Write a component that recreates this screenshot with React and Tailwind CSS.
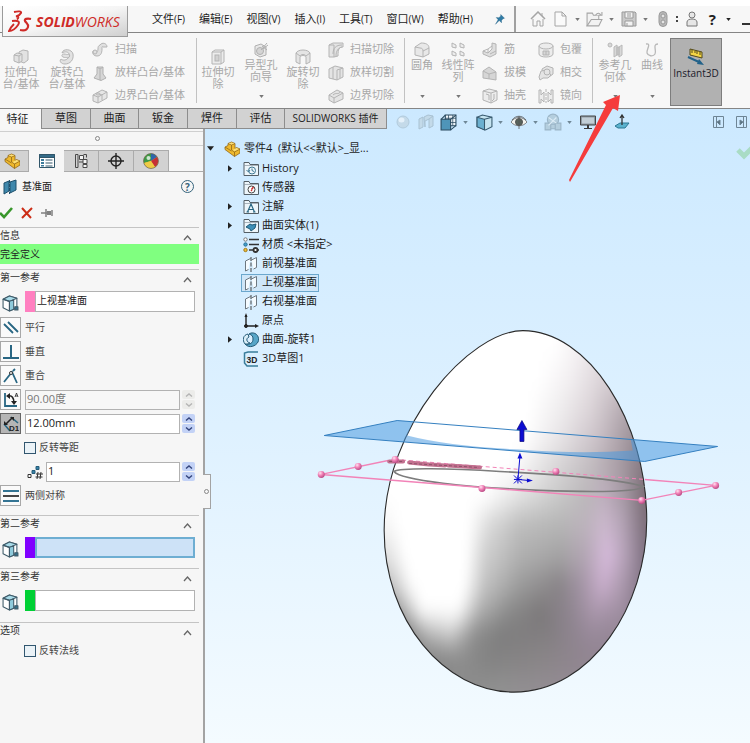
import React from "react";

const menus = ["文件(F)", "编辑(E)", "视图(V)", "插入(I)", "工具(T)", "窗口(W)", "帮助(H)"];

const commandTabs = [
  { label: "特征", width: "w-[41px]" },
  { label: "草图", width: "w-[49px]" },
  { label: "曲面", width: "w-[48px]" },
  { label: "钣金", width: "w-[49px]" },
  { label: "焊件", width: "w-[49px]" },
  { label: "评估", width: "w-[48px]" },
  { label: "SOLIDWORKS 插件", width: "w-[103px]" },
];

// Small 16x16 drawings, keyed by name
const icons = {
  extrude: (
    <g fill="#e2e2e2" stroke="#b4b4b4">
      <path d="M6 3l4-2 5 1v9l-4 3-5-2z" />
      <path d="M1 6l3-2 5 1v7l-3 2-5-2z" />
      <path d="M1 6l5 1 3-2M6 7v7" fill="none" />
    </g>
  ),
  revolve: (
    <g fill="#e2e2e2" stroke="#b4b4b4">
      <path d="M3 4C4-1 13 0 14 5c1 6-3 10-8 10-4 0-6-3-4-5 2 2 6 1 7-1-2-1-3 0-5-1s-1-3 1-3 3 1 5 0c0-2-4-3-7-1z" />
      <path d="M10 5c1 1 1 3-1 4" fill="none" />
    </g>
  ),
  sweep: (
    <g fill="#e0e0e0" stroke="#b4b4b4">
      <path d="M8 3c2-3 7-2 7 2h-4c-1-1-1 0-1 2 0 5-2 7-5 7s-5-2-4-5h3c0 2 2 1 2-2 0-2 0-3 2-4z" />
      <circle cx="3" cy="10" r="2" />
    </g>
  ),
  loft: (
    <g fill="#d6d6d6" stroke="#b0b0b0">
      <path d="M5 2h6v7l3 4-5 2.500-7-2.500 3-4z" />
      <path d="M5 2c2 2 4 2 6 0M8 4v11" fill="none" />
    </g>
  ),
  boundary: (
    <g fill="#e6e6e6" stroke="#b4b4b4">
      <path d="M1 7l9-5 5 2v6l-9 5-5-2z" />
      <path d="M1 7l5 2 9-5M6 9v6M5 5l5 2v5" fill="none" />
      <ellipse cx="6" cy="6" rx="2" ry="1" />
    </g>
  ),
  cutExtrude: (
    <g fill="#ececec" stroke="#b4b4b4">
      <path d="M2 3l3-2h9v12l-3 2H2z" />
      <path d="M2 3h9v12M11 3l3-2" fill="none" />
      <rect x="5" y="6" width="4" height="6" fill="#d2d2d2" />
    </g>
  ),
  hole: (
    <g fill="#e8e8e8" stroke="#b0b0b0">
      <path d="M2 4l6-2 5 3v8l-6 2-5-3z" />
      <circle cx="7" cy="9" r="3.500" fill="#d4d4d4" />
      <path d="M8 8l6-7M10 7l5-4M9 4l5 4" fill="none" />
    </g>
  ),
  cutRevolve: (
    <g fill="#e4e4e4" stroke="#b4b4b4">
      <path d="M1 4c2-4 12-4 14 0v9l-4 2V8c-1-2-5-2-6 0v7l-4-2z" />
      <path d="M1 4l4 3c1-2 5-2 6 0l4-3" fill="none" />
    </g>
  ),
  cutSweep: (
    <g fill="#e4e4e4" stroke="#b4b4b4">
      <path d="M1 3l4-2h10v4c-4 0-5 2-5 9l-4 1H1z" />
      <path d="M1 3h5v12M5 12c0-6 3-9 9-9M8 14c0-5 2-8 6-9" fill="none" />
    </g>
  ),
  cutLoft: (
    <g fill="#e4e4e4" stroke="#b4b4b4">
      <path d="M1 4l6-3 8 2v9l-6 3-8-2z" />
      <path d="M5 2v12M9 5v10M9 5l6-2M12 4v9" fill="none" />
    </g>
  ),
  cutBoundary: (
    <g fill="#e4e4e4" stroke="#b4b4b4">
      <path d="M1 7l8-5 6 3v6l-9 4-5-3z" />
      <path d="M1 7l5 3 9-5M6 10v5M5 7c3-3 6 0 7-3" fill="none" />
    </g>
  ),
  fillet: (
    <g fill="#e8e8e8" stroke="#b4b4b4">
      <path d="M1 5l6-4c4 0 8 1 8 5v6l-6 3-8-2z" />
      <path d="M1 5l5 1c2 0 3 1 3 3v6M9 9l6-3" fill="none" />
    </g>
  ),
  pattern: (
    <g fill="#eeeeee" stroke="#b4b4b4">
      <path d="M2 1l4 2v3l-4-1zM10 1l4 2v3l-4-1zM2 9l4 2v3l-4-1zM10 9l4 2v3l-4-1z" />
    </g>
  ),
  rib: (
    <g fill="#dedede" stroke="#b4b4b4">
      <path d="M10 1l4 1v10l-6 3-7-3v-3l5 2 4-4z" />
      <path d="M6 11V7l4-3M1 9l5-2M8 12l6-3" fill="none" />
    </g>
  ),
  draft: (
    <g fill="#d6d6d6" stroke="#b4b4b4">
      <path d="M1 6l6-4 7 5v8l-6-1-7-1z" />
      <path d="M1 6l6 3v5M7 9l7-2" fill="none" />
    </g>
  ),
  shell: (
    <g fill="#ececec" stroke="#b4b4b4">
      <path d="M1 3l6-2 8 2v9l-6 3-8-3z" />
      <path d="M1 3l8 2v10M9 5l6-2M4 6l3 1v5M12 6v5l-2 2" fill="none" />
    </g>
  ),
  wrap: (
    <g fill="#ececec" stroke="#b4b4b4">
      <path d="M1 4v8c0 4 14 4 14 0V4" />
      <ellipse cx="8" cy="4" rx="7" ry="3" />
      <path d="M5 9h6v4H5zM8 9v4" fill="#d6d6d6" />
    </g>
  ),
  intersect: (
    <g fill="#e4e4e4" stroke="#b4b4b4">
      <path d="M4 4l5-3 6 2v6l-4 3-6-2z" />
      <path d="M1 12l2-6 6-1 4 5-3 3H5l-3 2z" />
      <circle cx="9" cy="7" r="3" />
    </g>
  ),
  mirror: (
    <g fill="#ececec" stroke="#b4b4b4">
      <path d="M1 2h2v5l3-3v10l-3-3v4H1zM15 2h-2v5l-3-3v10l3-3v4h2z" />
      <path d="M8 1v14" strokeDasharray="3 1" />
    </g>
  ),
  refGeometry: (
    <g fill="#d8d8d8" stroke="#b8b8b8">
      <circle cx="3" cy="3" r="2" />
      <path d="M7 5l3-2v10l-3 2zM12 5l3-2v10l-3 2zM10 5h2v8h-2z" />
    </g>
  ),
  curves: (
    <path d="M2 2c6-1 0 6 1 9s6 4 8 1-3-10 3-10" fill="none" stroke="#b8b8b8" strokeWidth="1.300" />
  ),
  home: (
    <g fill="none" stroke="#a5a5a5">
      <path d="M1 8l7-7 7 7" strokeWidth="1.500" />
      <path d="M3 8v7h4v-5h3v5h3V8M12 2v3" />
    </g>
  ),
  file: <path d="M3 1h7l4 4v10H3zM10 1v4h4" fill="#fafafa" stroke="#a5a5a5" />,
  open: (
    <g fill="#f2f2f2" stroke="#a5a5a5">
      <path d="M1 14V2h5l1 2h5v4" />
      <path d="M1 14l4-6h10l-3 6zM9 4c2-3 4-2 5 0M12 4h3V1" />
    </g>
  ),
  save: (
    <g fill="#c9c9c9" stroke="#9b9b9b">
      <path d="M1 1h13l1 1v13H1z" />
      <path d="M4 1h8v6H4zM4 10h8v5H4z" fill="#f2f2f2" />
      <path d="M6 3h4M6 5h4M6 12v3" />
    </g>
  ),
  traffic: (
    <g fill="#b8b8b8" stroke="#999">
      <rect x="4" y="0.500" width="8" height="15" rx="4" />
      <circle cx="8" cy="5" r="2" fill="#e4e4e4" />
      <circle cx="8" cy="11" r="2" fill="#e4e4e4" />
    </g>
  ),
  user: (
    <g fill="#e6e6e6" stroke="#777">
      <circle cx="8" cy="4" r="3" />
      <path d="M3 15v-4c0-4 10-4 10 0v4z" />
    </g>
  ),
  pin: (
    <path d="M9 2l5 5-2 .5-2 2.500v3L7 10l-5 5 3.500-6L3 6l3.500.3L9 4z" fill="#2f7ba5" stroke="#205d80" strokeWidth=".5" />
  ),
  sphere: (
    <g fill="#c4dae9" stroke="#b2cbdc">
      <circle cx="8" cy="8" r="6" />
      <ellipse cx="6.500" cy="6" rx="3" ry="2.500" fill="#e5f1fa" stroke="none" />
    </g>
  ),
  section: (
    <g fill="#c3dae9" stroke="#a9c2d3">
      <path d="M1 5l4-2v10l-4 2zM6 3l4-2 5 1v10l-4 2V5L7 7v6z" />
      <path d="M11 5l4-3" />
    </g>
  ),
  viewOrient: (
    <g stroke="#28495e">
      <path d="M5 1h10v10H5z" fill="#f0f6fa" />
      <path d="M8 1v10M12 1v10M5 4h10M5 8h10" strokeWidth=".7" />
      <path d="M1 5l4-4M10 5l5-4M10 15l5-4" />
      <path d="M1 5h9v10H1z" fill="#4f95b9" />
    </g>
  ),
  displayStyle: (
    <g fill="#6bb0d0" stroke="#37596e">
      <path d="M1 3l5-2 9 2v9l-6 3-8-3z" fill="#c5e4f1" />
      <path d="M1 3l7 2v10l-7-3z" />
      <path d="M8 5l7-2" fill="none" />
    </g>
  ),
  eye: (
    <g fill="#f4f4ef" stroke="#555">
      <path d="M0 8c4-6 12-6 16 0-4 5-12 5-16 0z" strokeWidth=".7" />
      <circle cx="8" cy="8" r="3.500" fill="#57635b" />
      <path d="M8 2v13M1 6c4-5 10-5 14 0" fill="none" strokeWidth=".8" />
    </g>
  ),
  scene: (
    <g fill="#b4cede" stroke="#9bb5c7">
      <circle cx="8" cy="6" r="5" />
      <path d="M1 9h5v6H1zM10 9h5v6h-5zM6 10h4v4H6z" />
      <path d="M4 4l7 5M11 4L4 11" stroke="#dcecf6" />
    </g>
  ),
  monitor: (
    <g>
      <path d="M.5 2h15v9H.5z" fill="#8d9aa4" stroke="#454545" />
      <path d="M2 3.500h12v6H2z" fill="#c2ced6" />
      <path d="M7 11h2v3h3v1H4v-1h3z" fill="#383838" />
    </g>
  ),
  normalTo: (
    <g>
      <path d="M1 12l5-3h9l-4 5H4z" fill="#5cb2ce" stroke="#2c7894" />
      <path d="M8 11V2M6 4l2-3 2 3" fill="none" stroke="#333" strokeWidth="1.300" />
    </g>
  ),
  paneLeft: (
    <g fill="none" stroke="#6e8595">
      <path d="M3.500 2.500h10v11h-10zM6.500 3v11" />
      <path d="M10 6L7 8l3 3z" fill="#56707f" />
    </g>
  ),
  paneRight: (
    <g fill="none" stroke="#6e8595">
      <path d="M3.500 2.500h10v11h-10zM10.500 3v11" />
      <path d="M7 6l3 2-3 3z" fill="#56707f" />
    </g>
  ),
  part: (
    <g stroke="#91681c" strokeWidth=".8" strokeLinejoin="round">
      <path d="M4 2.500L7.500 1 11 2.500v5l1.500-1L16 8v4l-5.500 3.500L1 8.500V6l3-1.500z" fill="#efb92d" />
      <path d="M4 2.500L7.500 4v5l3 2v4.500M7.500 4L11 2.500M10.500 11L16 8M1 6l6.500 4" fill="none" />
      <path d="M4.500 2.600L7.500 1.500l3 1-3 1zM8.500 9l4-2 2.500 1-4.500 2.300z" fill="#fbe07a" stroke="none" />
    </g>
  ),
  propertyList: (
    <g fill="#fff" stroke="#31566a">
      <path d="M.5 1.500h15v13H.5z" />
      <path d="M.5 1.500h15v3H.5z" fill="#356c89" />
      <path d="M2 6h3v2H2zM2 9h3v2H2zM2 12h3v1.500H2z" fill="#3c7b9b" stroke="none" />
      <path d="M6.500 7h7M6.500 10h7M6.500 13h7" />
    </g>
  ),
  config: (
    <g fill="#f4f4f4" stroke="#4a4a4a">
      <path d="M5 1.500H2.500v13H5M5 1.500v13" fill="none" />
      <path d="M6.500 2.500h4v4h-4zM10 6.500h4v4h-4zM10 11.500h4v3h-4z" />
      <path d="M10.500 1.500h3v3M6 9h4" fill="none" />
    </g>
  ),
  target: (
    <g fill="none" stroke="#222" strokeWidth="1.400">
      <circle cx="8" cy="8" r="5" />
      <path d="M8 0v16M0 8h16" />
    </g>
  ),
  appearance: (
    <g>
      <circle cx="8" cy="8" r="7.500" fill="#e8b62c" />
      <path d="M8 8V.5A7.500 7.500 0 0 0 1 10z" fill="#3e9a45" />
      <path d="M8 8V.5A7.500 7.500 0 0 1 14 4z" fill="#3066aa" />
      <path d="M8 8l6-4a7.500 7.500 0 0 1-2 10z" fill="#c63036" />
      <path d="M1 10l7-2 4 6c-4 3-9 1-11-4z" fill="#eecb45" />
      <circle cx="5.500" cy="5" r="2" fill="#fff" opacity=".75" />
      <circle cx="8" cy="8" r="7.500" fill="none" stroke="#555" strokeWidth=".6" />
    </g>
  ),
  plane: (
    <g fill="#3f88ac" stroke="#1f506c">
      <path d="M2 4l5-2v10l-5 3zM8 3l6-2v10l-6 3z" />
      <path d="M7.500 1v14" strokeDasharray="3 1" />
    </g>
  ),
  faceSelect: (
    <g fill="#fff" stroke="#3f5b69" strokeLinejoin="round">
      <path d="M1 4l6-3 7 2v9l-7 3-6-3z" />
      <path d="M1 4l6-3 7 2-7 3z" fill="#a8dbe9" />
      <path d="M7 6l4-1.500v9L7 15z" fill="#8fcbdc" />
      <path d="M1 4l6 2v9" fill="none" />
      <path d="M12 11h3v3h-3z" fill="#33718c" />
    </g>
  ),
  parallel: <path d="M1 4l9 9M5 2l10 10" stroke="#286683" strokeWidth="1.800" />,
  perpendicular: <path d="M8 1v12M0 14h16" stroke="#286683" strokeWidth="2" />,
  coincident: (
    <g fill="none" stroke="#286683" strokeWidth="1.800">
      <path d="M1 14L9 4l5 11" />
      <circle cx="8" cy="5" r="1.500" stroke="#333" strokeWidth="1" fill="#fff" />
      <path d="M10 3l2-2" />
    </g>
  ),
  angle: (
    <g fill="none" stroke="#222">
      <path d="M2 1v13h12" stroke="#286683" strokeWidth="1.800" />
      <path d="M5 4c4-1 6 2 6 7" strokeWidth="1.600" />
      <path d="M7 1L3 4l4 3zM8 9h6l-3 4z" fill="#222" stroke="none" />
      <path d="M12 5l1.500-4L15 5M12.500 4h2" strokeWidth=".8" />
    </g>
  ),
  distance: (
    <g fill="none" stroke="#222">
      <path d="M1 8l6 7M8 1l7 6" stroke="#286683" strokeWidth="1.600" />
      <path d="M3 8l6-6" strokeWidth="1.600" />
      <path d="M1 9V5l4 4zM7 1h4v4z" fill="#222" stroke="none" />
      <text x="6" y="15" fontSize="8" fontWeight="700" fontFamily="Liberation Sans, sans-serif" fill="#222" stroke="none">D1</text>
    </g>
  ),
  instances: (
    <g fill="#fff" stroke="#333">
      <path d="M1 10.500h3v3H1z" />
      <path d="M5 6.500h3v3H5zM9 2.500h3v3H9z" fill="#3782a8" stroke="#265c78" />
      <path d="M11 8l-1 7M14 8l-1 7M9 10h7M8.500 13h7" fill="none" />
    </g>
  ),
  symmetric: (
    <g strokeWidth="1.800">
      <path d="M0 3h16M0 13h16" stroke="#347493" />
      <path d="M0 8h16" stroke="#333" />
    </g>
  ),
  history: (
    <Folder>
      <circle cx="9" cy="9.500" r="3.500" fill="#eef7fc" stroke="#3c7590" />
      <path d="M9 7.500v2l2 1M3.500 9l2 2 1.500-2" fill="none" stroke="#3c7590" />
    </Folder>
  ),
  sensor: (
    <Folder>
      <circle cx="8.500" cy="9.500" r="3.500" fill="#fff" stroke="#444" />
      <path d="M8.500 9.500l2-2.500M8 10l1 1" stroke="#c33" strokeWidth="1.500" />
    </Folder>
  ),
  annotation: (
    <Folder>
      <path d="M4.500 13l3.500-8 3.500 8M6 10.500h4M3.500 13h2.500M10 13h2.500" fill="none" stroke="#286683" strokeWidth="1.200" />
    </Folder>
  ),
  surfaceBody: (
    <Folder>
      <path d="M3 9l4-3 2 1 4-1-1 4-4 3-1-2z" fill="#3e8fb7" stroke="#1f5875" />
    </Folder>
  ),
  material: (
    <g fill="#fff" stroke="#333">
      <path d="M6 2.500h10M6 7.500h10M6 13h10" strokeWidth="1.500" />
      <circle cx="2.500" cy="2.500" r="1.700" stroke="#777" />
      <circle cx="2.500" cy="7.500" r="1.700" fill="#42a0cd" stroke="#2b6f92" />
      <circle cx="2.500" cy="13" r="1.700" fill="#f0bd35" stroke="#a17a1c" />
      <circle cx="12.500" cy="13" r="2" strokeWidth="1.800" />
    </g>
  ),
  refPlane: (
    <g fill="#f5fbff" stroke="#6d7780">
      <path d="M7.500 2.500L2.500 5v10l3-1.500M8.500 4l5-2.500v10l-3 1.500" />
      <path d="M8 1v15" stroke="#444" strokeDasharray="4 1.500" />
    </g>
  ),
  origin: (
    <g stroke="#222" fill="#222">
      <path d="M3 2v11h11" fill="none" strokeWidth="1.400" />
      <path d="M1.500 4L3 0l1.500 4zM12 11l4 2-4 2z" stroke="none" />
      <circle cx="3" cy="13" r="1.500" />
    </g>
  ),
  surfaceRevolve: (
    <g stroke="#245a76">
      <path d="M8 1c6-1 9 5 7 9s-9 7-13 2c5 1 8-1 8-5 0-3-1-4-4-5z" fill="#58a6c8" />
      <path d="M5 2C0 3-1 8 2 12c2 0 4 0 5-1C3 10 3 6 6 5z" fill="#d9eef8" />
    </g>
  ),
  sketch3d: (
    <g fill="none">
      <path d="M15 1H5L1.500 2v10L4 15h11" stroke="#3a7d9b" strokeWidth="1.500" />
      <text x="3.500" y="11.500" fontSize="8.500" fontWeight="700" fontFamily="Liberation Sans, sans-serif" fill="#222">3D</text>
    </g>
  ),
};

function Folder({ children }) {
  return (
    <g>
      <path d="M1 14.500V1.500h5l1 2h8.500v11z" fill="#edf6fb" stroke="#555f66" />
      <path d="M1 4.500h14" stroke="#8b979f" strokeWidth=".7" />
      {children}
    </g>
  );
}

function Icon({ name, className = "h-4 w-4" }) {
  return (
    <svg viewBox="0 0 16 16" className={`shrink-0 ${className}`} fill="none" aria-hidden="true">
      {icons[name]}
    </svg>
  );
}

function Caret({ className = "h-[3px] w-[5px] text-[#777]" }) {
  return (
    <svg viewBox="0 0 6 4" className={`shrink-0 ${className}`} aria-hidden="true">
      <path d="M0 0h6L3 4z" fill="currentColor" />
    </svg>
  );
}

function BigCommand({ icon, label, width, menu, raised }) {
  return (
    <button
      className={`flex shrink-0 flex-col items-center text-[11px] leading-[12px] text-[#a8a8a8] ${width} ${
        raised ? "pt-[9px]" : "pt-4"
      }`}
    >
      <Icon name={icon} />
      <span className="mt-px whitespace-pre">{label}</span>
      {menu && <Caret className="mt-auto mb-[10px] h-[3px] w-[5px] text-[#777]" />}
    </button>
  );
}

function CommandList({ items, width, gap = "gap-[6px]" }) {
  return (
    <div className={`flex shrink-0 flex-col pt-[5px] ${width}`}>
      {items.map(([icon, label]) => (
        <button key={label} className={`flex h-[23px] items-center text-[11px] whitespace-nowrap text-[#a8a8a8] ${gap}`}>
          <Icon name={icon} />
          {label}
        </button>
      ))}
    </div>
  );
}

function Separator() {
  return <div className="my-[5px] w-px shrink-0 bg-[#c2c2c2]" />;
}

function Logo() {
  return (
    <div className="absolute top-0 left-[2px] flex h-[31px] w-[126px] items-center border border-t-0 border-[#9b9b9b] bg-linear-to-br from-white via-[#f5f5f5] to-[#cfcfcf] pl-[5px] text-[#cf2a27]">
      <svg viewBox="0 0 24 23" className="h-[23px] w-6 shrink-0" fill="none" stroke="currentColor" aria-hidden="true">
        <path d="M6 2c4-1 8-1 7 1-1 2-3 3-5 3.500 3 0 3 1 1 3" strokeWidth="1.900" />
        <path d="M4 11c7-1 8 1 6 4-2 3-5 6-9 6 1-3 3-5 5-7" strokeWidth="1.900" />
        <path d="M23 9c-4-1-7 0-6 2s4 3 3 6-4 4-8 3" strokeWidth="2.200" />
      </svg>
      <span className="ml-[4px] font-['Open_Sans',sans-serif] text-[14px] italic">
        <b>SOLID</b>WORKS
      </span>
    </div>
  );
}

function TitleBar() {
  return (
    <header className="relative mt-[6px] flex h-[27px] shrink-0 items-center border-b border-[#858585] bg-[#f7f7f7]">
      <Logo />
      <nav className="ml-[152px] flex gap-[14px] text-[11px] text-[#1c1c1c]">
        {menus.map((menu) => (
          <button key={menu} className="whitespace-nowrap">
            {menu.slice(0, 2)}
            <span className="text-[10px]">{menu.slice(2)}</span>
          </button>
        ))}
      </nav>
      <div className="ml-auto flex h-full items-center">
        <Icon name="pin" className="h-3 w-3" />
        <div className="mr-[14px] ml-2 h-full w-[2px] bg-[#a0a0a0]" />
        <Icon name="home" />
        <Icon name="file" className="ml-[6px] h-4 w-4" />
        <Caret className="ml-[7px] h-[3px] w-[5px] text-[#777]" />
        <Icon name="open" className="ml-[6px] h-[17px] w-[17px]" />
        <Caret className="ml-[6px] h-[3px] w-[5px] text-[#777]" />
        <Icon name="save" className="ml-[7px] h-4 w-4" />
        <Caret className="ml-[6px] h-[3px] w-[5px] text-[#777]" />
        <Icon name="traffic" className="ml-[7px] h-4 w-4" />
        <span className="ml-[5px] flex flex-col gap-[2px]">
          <i className="h-[2px] w-[2px] bg-[#444]" />
          <i className="h-[2px] w-[2px] bg-[#444]" />
        </span>
        <Icon name="user" className="ml-[6px] h-4 w-4" />
        <button className="ml-[9px] text-[15px] font-bold text-[#222]">?</button>
        <Caret className="ml-[10px] h-[3px] w-[5px] text-[#222]" />
        <div className="mt-[9px] ml-[11px] h-[2px] w-2 bg-[#333]" />
      </div>
    </header>
  );
}

function Ribbon() {
  return (
    <div className="flex h-[76px] shrink-0 border-b border-[#858585] bg-[#f7f7f7]">
      <BigCommand icon="extrude" label={"拉伸凸\n台/基体"} width="w-[42px]" />
      <BigCommand icon="revolve" label={"旋转凸\n台/基体"} width="w-[50px]" />
      <CommandList
        width="w-[104px]"
        gap="gap-[7px]"
        items={[
          ["sweep", "扫描"],
          ["loft", "放样凸台/基体"],
          ["boundary", "边界凸台/基体"],
        ]}
      />
      <Separator />
      <BigCommand icon="cutExtrude" label={"拉伸切\n除"} width="w-[42px]" />
      <BigCommand icon="hole" label={"异型孔\n向导"} width="w-[44px]" raised menu />
      <BigCommand icon="cutRevolve" label={"旋转切\n除"} width="w-[40px]" />
      <CommandList
        width="w-[81px] pl-[5px]"
        items={[
          ["cutSweep", "扫描切除"],
          ["cutLoft", "放样切割"],
          ["cutBoundary", "边界切除"],
        ]}
      />
      <Separator />
      <BigCommand icon="fillet" label="圆角" width="w-[34px]" raised menu />
      <BigCommand icon="pattern" label={"线性阵\n列"} width="w-[38px]" raised menu />
      <CommandList
        width="w-[55px] pl-[5px]"
        items={[
          ["rib", "筋"],
          ["draft", "拔模"],
          ["shell", "抽壳"],
        ]}
      />
      <CommandList
        width="w-[60px] pl-[6px]"
        items={[
          ["wrap", "包覆"],
          ["intersect", "相交"],
          ["mirror", "镜向"],
        ]}
      />
      <Separator />
      <BigCommand icon="refGeometry" label={"参考几\n何体"} width="w-[44px]" raised menu />
      <BigCommand icon="curves" label="曲线" width="w-[30px]" raised menu />
      <button className="mt-[5px] mb-[2px] ml-[3px] flex w-[52px] shrink-0 flex-col items-center border border-[#7d7d7d] bg-[#b1b1b1] pt-[9px] text-[10px] leading-[14px] font-medium text-[#1a1a2a]">
        <svg viewBox="0 0 18 18" className="h-[18px] w-[18px]" aria-hidden="true">
          <path d="M3 1l12 3v6L3 7z" fill="#f4d545" stroke="#51481b" />
          <path d="M5 2v3M8 3v2M10 3v3M13 4v3" stroke="#51481b" />
          <path d="M1 9l11 5" stroke="#22628a" strokeWidth="2" />
          <path d="M12 11l5 6-7-1z" fill="#22628a" />
        </svg>
        Instant3D
      </button>
    </div>
  );
}

function CommandTabs() {
  return (
    <div className="flex h-5 shrink-0">
      {commandTabs.map((tab, i) => (
        <button
          key={tab.label}
          className={`h-5 shrink-0 whitespace-nowrap text-[#1c1c1c] ${tab.width} ${
            i === 0 ? "bg-[#f7f7f7] pr-[6px]" : "border-b border-l border-[#8d8d8d] bg-[#d2d2d2]"
          } ${i === 6 ? "border-r text-[10px]" : "text-[11px]"}`}
        >
          {tab.label}
        </button>
      ))}
    </div>
  );
}

function ViewToolbar() {
  return (
    <div className="flex h-[26px] flex-1 items-center pl-2">
      <Icon name="sphere" />
      <Icon name="section" className="ml-[7px] h-4 w-4" />
      <Icon name="viewOrient" className="ml-[6px] h-[17px] w-[17px]" />
      <Caret className="ml-[6px] h-[3px] w-[5px] text-[#6f8796]" />
      <Icon name="displayStyle" className="ml-2 h-[17px] w-[17px]" />
      <Caret className="ml-[5px] h-[3px] w-[5px] text-[#6f8796]" />
      <Icon name="eye" className="ml-2 h-4 w-4" />
      <Caret className="ml-[6px] h-[3px] w-[5px] text-[#6f8796]" />
      <Icon name="scene" className="ml-[6px] h-[18px] w-[18px]" />
      <Caret className="ml-[5px] h-[3px] w-[5px] text-[#6f8796]" />
      <Icon name="monitor" className="ml-2 h-4 w-4" />
      <Icon name="normalTo" className="ml-[18px] h-4 w-4" />
      <div className="mr-px ml-auto flex gap-[7px]">
        <Icon name="paneLeft" />
        <Icon name="paneRight" />
      </div>
    </div>
  );
}

function Section({ title, className = "", children }) {
  return (
    <section className={`mr-1 border-t border-[#c4c4c4] ${className}`}>
      <h2 className="flex h-4 items-center justify-between pr-[7px] pb-px text-[#333]">
        {title}
        <svg viewBox="0 0 9 6" className="mt-1 h-[6px] w-[9px]" fill="none" aria-hidden="true">
          <path d="M1 5l3.500-4L8 5" stroke="#666" strokeWidth="1.300" />
        </svg>
      </h2>
      {children}
    </section>
  );
}

function SelectionBox({ label, swatch, value = "", active }) {
  return (
    <label className="mt-[5px] flex h-[21px] items-center pr-1">
      <span className="flex w-[25px] shrink-0 pt-1 pl-[2px]">
        <Icon name="faceSelect" className="h-[17px] w-[17px]" />
      </span>
      <span className={`h-full w-[10px] shrink-0 ${swatch}`} />
      <input
        aria-label={label}
        defaultValue={value}
        className={`h-full min-w-0 flex-1 border px-px pb-[5px] text-[#222] outline-none ${
          active ? "border-2 border-[#6eaed2] bg-[#cde2f7]" : "border-[#b2b2b2] bg-white"
        }`}
      />
    </label>
  );
}

function Spinner({ disabled }) {
  const look = disabled ? "bg-[#ececea] text-[#b5b5b5]" : "bg-[#c3d2f6] text-[#34457c]";
  return (
    <span className="ml-[2px] flex w-[13px] shrink-0 flex-col gap-px">
      {["M1 3.500L4 1l3 2.500", "M1 .5L4 3 7 .5"].map((d, i) => (
        <button
          key={d}
          disabled={disabled}
          aria-label={i ? "减少" : "增加"}
          className={`flex h-[9px] items-center justify-center rounded-[2px] ${look}`}
        >
          <svg viewBox="0 0 8 4" className="h-1 w-2" fill="none" aria-hidden="true">
            <path d={d} stroke="currentColor" strokeWidth="1.400" />
          </svg>
        </button>
      ))}
    </span>
  );
}

function RelationButton({ icon, label, pressed }) {
  return (
    <button
      aria-label={label}
      className={`flex h-[21px] w-[21px] shrink-0 items-center justify-center border ${
        pressed ? "border-[#666] bg-[#b5b5b5]" : "border-[#a8a8a8] bg-[#fafafa]"
      }`}
    >
      <Icon name={icon} />
    </button>
  );
}

function Relation({ icon, label }) {
  return (
    <div className="flex h-[21px] items-center gap-[4px] text-[#444]">
      <RelationButton icon={icon} label={label} />
      {label}
    </div>
  );
}

function NumberRow({ label, value, disabled, children }) {
  return (
    <div className="flex h-[21px] items-center pr-1">
      {children}
      <input
        aria-label={label}
        defaultValue={value}
        disabled={disabled}
        className={`h-5 min-w-0 flex-1 border border-[#b2b2b2] px-px pb-[3px] text-[11px] outline-none ${
          disabled ? "bg-[#f7f7f7] text-[#777]" : "bg-white text-[#222]"
        }`}
      />
      <Spinner disabled={disabled} />
    </div>
  );
}

function Check({ label }) {
  return (
    <label className="flex h-[21px] items-center gap-[3px] pl-[24px] text-[#444]">
      <input type="checkbox" className="h-3 w-3 appearance-none border border-[#31566f] bg-[#eaf2f7] checked:bg-[#31566f]" />
      {label}
    </label>
  );
}

function PropertyPanel() {
  const tabs = ["part", "propertyList", "config", "target", "appearance"];
  return (
    <aside className="relative w-[205px] shrink-0 border-r-2 border-[#a3a3a3] bg-[#f6f6f6] pt-[2px] text-[10px]">
      <div className="mb-1 flex h-[15px] items-center border-y border-[#cfcfcf] pl-[95px]">
        <span className="h-[5px] w-[5px] rounded-full border border-[#888]" />
      </div>
      <div className="flex h-[22px]">
        {tabs.map((tab, i) => (
          <button
            key={tab}
            aria-label={tab}
            className={`flex items-center justify-center border-[#ababab] ${i === 0 ? "w-[29px] pr-[5px]" : "w-[35px]"} ${
              i === 1 ? "bg-[#f6f6f6]" : "border-t border-r border-b bg-[#d2d2d2]"
            }`}
          >
            <Icon name={tab} />
          </button>
        ))}
        <span className="flex-1 border-b border-[#ababab]" />
      </div>

      <div className="flex h-[29px] items-center pr-[9px] pl-[2px] text-[#222]">
        <Icon name="plane" />
        <h1 className="ml-1">基准面</h1>
        <button className="ml-auto flex h-[13px] w-[13px] items-center justify-center rounded-full border border-[#35637b] text-[10px] leading-none font-bold text-[#35637b]">
          ?
        </button>
      </div>
      <div className="flex h-[26px] items-center pb-[2px]">
        <svg viewBox="0 0 14 12" className="h-3 w-[14px]" fill="none" aria-hidden="true">
          <path d="M0 6l4 4 8-9" stroke="#38962b" strokeWidth="2.600" />
        </svg>
        <svg viewBox="0 0 12 12" className="ml-[7px] h-3 w-3" fill="none" aria-hidden="true">
          <path d="M1 1l9 10M11 1L1 11" stroke="#cc2d16" strokeWidth="2" />
        </svg>
        <svg viewBox="0 0 12 10" className="ml-[8px] h-[10px] w-3" fill="none" aria-hidden="true">
          <path d="M0 5h5M5 1v8M5 5h5M11 2v6" stroke="#808080" strokeWidth="1.500" />
          <path d="M6 3h4v4H6z" fill="#808080" />
        </svg>
      </div>

      <Section title="信息" className="pb-[5px]">
        <p className="flex h-5 items-center bg-[#80ff80] text-[#222]">完全定义</p>
      </Section>

      <Section title="第一参考" className="pb-[9px]">
        <SelectionBox label="第一参考" swatch="bg-[#ff80c0]" value="上视基准面" />
        <div className="mt-[5px] flex flex-col gap-[3px]">
          <Relation icon="parallel" label="平行" />
          <Relation icon="perpendicular" label="垂直" />
          <Relation icon="coincident" label="重合" />
          <NumberRow label="角度" value="90.00度" disabled>
            <span className="w-[25px]">
              <RelationButton icon="angle" label="角度" />
            </span>
          </NumberRow>
          <NumberRow label="距离" value="12.00mm">
            <span className="w-[25px]">
              <RelationButton icon="distance" label="距离" pressed />
            </span>
          </NumberRow>
          <Check label="反转等距" />
          <NumberRow label="实例数" value="1">
            <span className="w-[46px] pl-[27px]">
              <Icon name="instances" />
            </span>
          </NumberRow>
          <Relation icon="symmetric" label="两侧对称" />
        </div>
      </Section>

      <Section title="第二参考" className="pb-[10px]">
        <SelectionBox label="第二参考" swatch="bg-[#8000ff]" active />
      </Section>

      <Section title="第三参考" className="pb-[11px]">
        <SelectionBox label="第三参考" swatch="bg-[#00d035]" />
      </Section>

      <Section title="选项">
        <div className="mt-px">
          <Check label="反转法线" />
        </div>
      </Section>

      {/* splitter grip, sits over the graphics area */}
      <div className="absolute top-[345px] -right-2 flex h-[35px] w-2 items-center justify-center border border-l-0 border-[#a3a3a3] bg-[#f6f6f6]">
        <span className="h-[5px] w-[5px] rounded-full border border-[#888]" />
      </div>
    </aside>
  );
}

const treeItems = [
  { icon: "history", label: "History", expandable: true },
  { icon: "sensor", label: "传感器" },
  { icon: "annotation", label: "注解", expandable: true },
  { icon: "surfaceBody", label: "曲面实体(1)", expandable: true },
  { icon: "material", label: "材质 <未指定>" },
  { icon: "refPlane", label: "前视基准面" },
  { icon: "refPlane", label: "上视基准面", selected: true },
  { icon: "refPlane", label: "右视基准面" },
  { icon: "origin", label: "原点" },
  { icon: "surfaceRevolve", label: "曲面-旋转1", expandable: true },
  { icon: "sketch3d", label: "3D草图1" },
];

function FeatureTree() {
  return (
    <div className="relative pt-[9px] pl-[2px] text-[11px] text-[#1b1b1b]">
      <div className="flex h-[21px] items-center whitespace-nowrap">
        <Caret className="mr-[10px] h-[5px] w-[7px] text-[#222]" />
        <Icon name="part" />
        <span className="ml-1">零件4&nbsp; (默认&lt;&lt;默认&gt;_显...</span>
      </div>
      <ul>
        {treeItems.map((item) => (
          <li key={item.label} className="flex h-[19px] items-center pl-[21px]">
            <span className="w-[13px] shrink-0">
              {item.expandable && (
                <svg viewBox="0 0 5 8" className="h-[7px] w-1" aria-hidden="true">
                  <path d="M0 0l5 4-5 4z" fill="#222" />
                </svg>
              )}
            </span>
            <span
              className={`flex h-[18px] items-center gap-[3px] border px-px whitespace-nowrap ${
                item.selected ? "border-[#6ba7cd] bg-[#cfe6f8]" : "border-transparent"
              }`}
            >
              <Icon name={item.icon} />
              {item.label}
            </span>
          </li>
        ))}
      </ul>
    </div>
  );
}

// Surface shading: horizontal bands [top, bottom, [x, colour]...], blurred together
const bands = [
  [290, 360, [[555, "#ffffff"], [600, "#e8e2e6"]]],
  [360, 390, [[540, "#ffffff"], [570, "#f3f0f2"], [605, "#dad2d7"]]],
  [390, 420, [[530, "#ffffff"], [560, "#f0eeef"], [590, "#ddd6da"], [625, "#b5aab1"]]],
  [420, 450, [[525, "#ffffff"], [560, "#e8e5e7"], [600, "#c9bfc6"], [635, "#9a8f96"]]],
  [450, 480, [[512, "#ffffff"], [550, "#dedcdd"], [590, "#c3bdc1"], [620, "#a89ca4"], [645, "#83767f"]]],
  [480, 510, [[485, "#ffffff"], [520, "#e2e2e2"], [560, "#c8c8c8"], [585, "#bbb8ba"], [605, "#bdaebd"], [625, "#a498a3"], [645, "#7c6e77"]]],
  [510, 540, [[385, "#f5f5f5"], [400, "#ffffff"], [468, "#ffffff"], [490, "#d8d8d8"], [520, "#bdbdbd"], [560, "#b5b5b5"], [585, "#bcb2bc"], [605, "#cbb8cd"], [622, "#b6a5b8"], [645, "#7e707c"]]],
  [540, 570, [[385, "#dedede"], [406, "#ffffff"], [466, "#ffffff"], [485, "#cfcfcf"], [520, "#b0b0b0"], [560, "#a4a3a4"], [585, "#b3a6b4"], [608, "#d6badb"], [625, "#b5a2b8"], [645, "#807282"]]],
  [570, 598, [[388, "#bcbcbc"], [412, "#ffffff"], [464, "#ffffff"], [485, "#c2c2c2"], [520, "#9c9c9c"], [558, "#888487"], [580, "#a092a2"], [603, "#c9aecc"], [620, "#b09db2"], [642, "#857788"]]],
  [598, 622, [[396, "#909090"], [422, "#ffffff"], [458, "#ffffff"], [480, "#b0b0b0"], [510, "#8a8a8a"], [540, "#7b7879"], [570, "#8f8590"], [595, "#ab98ad"], [620, "#a08fa2"], [640, "#86788a"]]],
  [622, 645, [[408, "#7c7c7c"], [430, "#b8b8b8"], [450, "#cecece"], [475, "#8c8c8c"], [500, "#7c7c7c"], [550, "#827e81"], [590, "#978899"], [620, "#958796"]]],
  [645, 675, [[430, "#858585"], [460, "#8c8c8c"], [490, "#838383"], [540, "#898587"], [600, "#938593"]]],
  [675, 740, [[450, "#8a8a8a"], [500, "#919191"], [570, "#948b94"]]],
];

const handles = [
  [321, 474],
  [358, 466],
  [395, 459],
  [482, 488],
  [556, 471],
  [716, 485],
  [679, 492],
  [642, 500],
];

function EggModel() {
  const egg =
    "M523 330C470 330 384 425 384 530C384 620 444 692 514 692C592 692 647 604 647 520C647 420 588 330 523 330z";
  return (
    <svg viewBox="205 128 545 615" preserveAspectRatio="xMidYMin meet" className="absolute inset-0 h-full w-full" aria-hidden="true">
      <defs>
        <clipPath id="eggClip">
          <path d={egg} />
        </clipPath>
        <filter id="soft" filterUnits="userSpaceOnUse" x="320" y="270" width="400" height="500" colorInterpolationFilters="sRGB">
          <feGaussianBlur stdDeviation="4 12" />
        </filter>
        {bands.map(([top, , stops]) => (
          <linearGradient key={top} id={`band${top}`} gradientUnits="userSpaceOnUse" x1="380" y1="0" x2="650" y2="0">
            {stops.map(([x, color]) => (
              <stop key={x} offset={(x - 380) / 270} stopColor={color} />
            ))}
          </linearGradient>
        ))}
        <radialGradient id="handle" cx=".35" cy=".3" r=".7">
          <stop offset="0" stopColor="#ffe3f1" />
          <stop offset=".5" stopColor="#f283b8" />
          <stop offset="1" stopColor="#bd4f88" />
        </radialGradient>
      </defs>

      <g clipPath="url(#eggClip)">
        <g filter="url(#soft)">
          {bands.map(([top, bottom]) => (
            <rect key={top} x="330" y={top} width="380" height={bottom - top + 1} fill={`url(#band${top})`} />
          ))}
        </g>
      </g>
      <path d={egg} fill="none" stroke="#2a2a2a" strokeWidth="1.100" />

      <path
        d="M324 435L397 420L413 421L407 435Q450 446 520 449Q580 454 633 450L631 439L718 446L645 461z"
        fill="#4c9be0"
        fillOpacity=".55"
      />
      <path d="M324 435L397 420L718 446L645 461z" fill="none" stroke="#347fc0" />

      <path
        d="M394 471C400 467 450 468 500 471C560 474 620 479 644 486C640 491 600 492 540 490C470 487 400 480 394 471z"
        fill="none"
        stroke="#7d7d7d"
        strokeWidth="1.600"
      />

      <g fill="none" stroke="#f283b8" strokeWidth="1.400">
        <path d="M388 460L321 474L642 500L716 485L645 479" />
        <path d="M395 459L645 479" strokeDasharray="4 3" strokeWidth="1" />
      </g>
      <path d="M389 461h14M409 462l20 2M430 464l15 1M448 465l32 2" stroke="#c2708f" strokeWidth="4" strokeLinecap="round" />
      <path d="M389 461h14M409 463l70 4" stroke="#8d5168" strokeWidth="1" strokeDasharray="3 2" />
      {handles.map(([x, y]) => (
        <circle key={x} cx={x} cy={y} r="3.500" fill="url(#handle)" />
      ))}

      <g fill="#0c0cd2" stroke="#0c0cd2">
        <path d="M522 420l5 9h-3v12h-4v-12h-3z" stroke="#07077c" strokeWidth=".7" />
        <path d="M518 479L520 456M518 479l10 1M514 475l8 8M522 475l-8 8M514 479h8M518 475v8" fill="none" />
        <path d="M520 452l2.500 6h-5zM533 480l-6 2v-4z" stroke="none" />
      </g>
    </svg>
  );
}

export default function App() {
  return (
    <div className="relative flex min-h-screen flex-col overflow-hidden bg-white font-['Open_Sans','Noto_Sans_CJK_SC',sans-serif]">
      <TitleBar />
      <Ribbon />
      <div className="flex flex-1 flex-col bg-linear-to-b from-[#cce9ff] via-[#def1ff] to-[#f4fbff]">
        <div className="relative z-10 flex h-5 shrink-0">
          <CommandTabs />
          <ViewToolbar />
        </div>
        <div className="flex flex-1">
          <PropertyPanel />
          <main className="relative -z-0 flex-1">
            <EggModel />
            <FeatureTree />
            <svg viewBox="0 0 18 14" className="absolute top-[17px] -right-1 h-[14px] w-[18px]" fill="none" aria-hidden="true">
              <path d="M2 4l6 6 9-9" stroke="#a9dcc5" strokeWidth="5" />
            </svg>
          </main>
        </div>
      </div>

      {/* pointer to the reference geometry command */}
      <svg viewBox="0 0 52 88" className="pointer-events-none absolute top-[94px] left-[569px] z-20 h-[88px] w-[52px]" aria-hidden="true">
        <path d="M51 1L49 17L44 14L1 88L0 86L37 11L34 8z" fill="#f53c3c" />
      </svg>
    </div>
  );
}
